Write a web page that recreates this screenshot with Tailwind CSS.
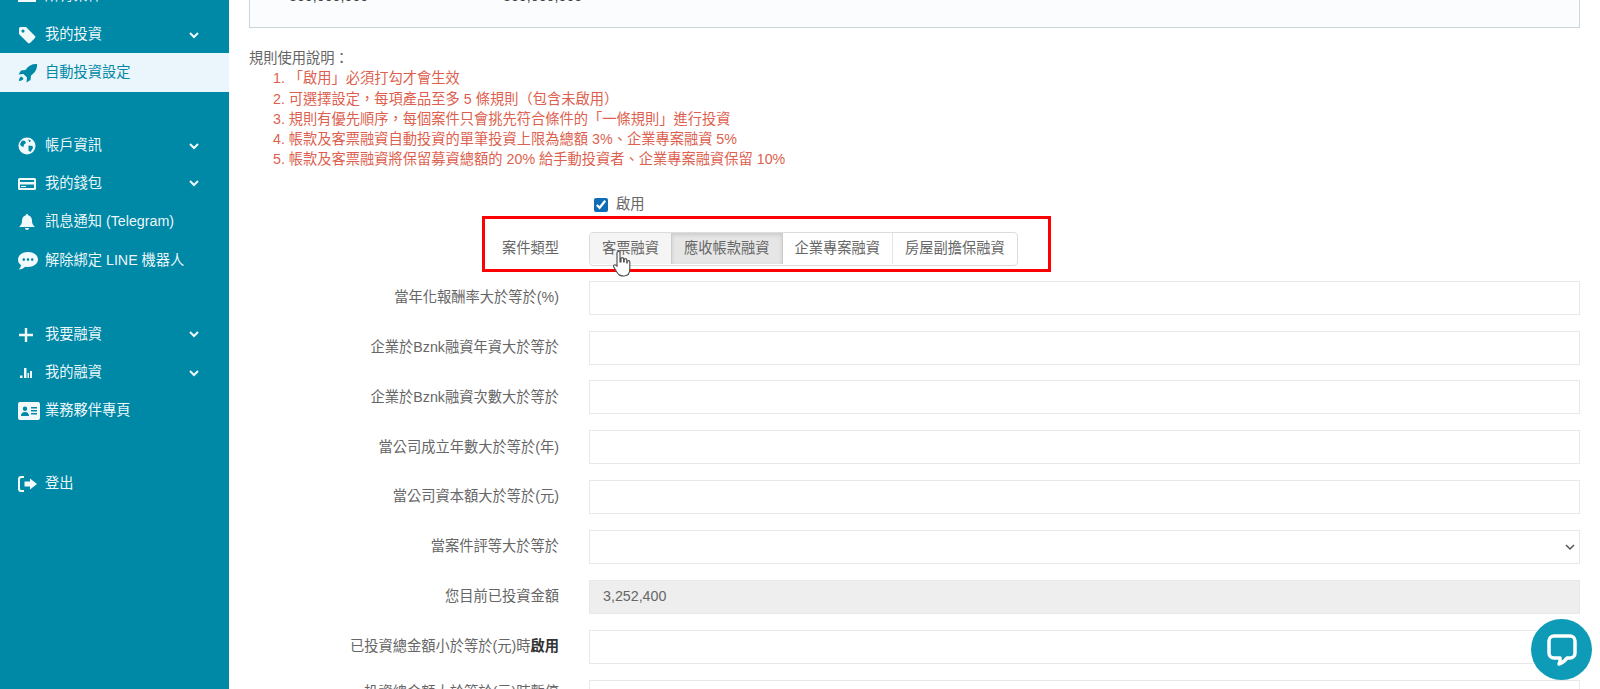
<!DOCTYPE html>
<html lang="zh-Hant">
<head>
  <meta charset="UTF-8">
  <title>自動投資設定</title>
  <script src="https://cdn.jsdelivr.net/npm/@tailwindcss/browser@4"></script>
</head>
<body class="bg-white overflow-hidden font-['Liberation_Sans','Noto_Sans_CJK_TC',sans-serif] text-[14.25px] text-[#666]">
<div class="flex h-[689px] w-[1600px] overflow-hidden relative">

  <!-- sidebar -->
  <aside class="w-[229px] shrink-0 bg-[#0089a7] text-white/95">
    <div class="-mt-[23px]">
      <a class="flex items-center h-[38px] pl-[18px]">
        <svg class="w-[18px] h-[14px]" viewBox="0 0 18 14" fill="currentColor"><path d="M0 1h18v12H0zM2 3v8h14V3z"/><path d="M4 5h10v1.500H4zM4 8h10v1.500H4z"/></svg>
        <span class="ml-[9px]">所有案件</span>
      </a>
      <a class="flex items-center h-[36px] mt-[1px] pt-[2px] pl-[18px]">
        <svg class="w-[18px] h-[18px]" viewBox="0 0 18 18" fill="currentColor"><path d="M1 2.500A1.500 1.500 0 0 1 2.500 1H8l9 9a1.500 1.500 0 0 1 0 2l-5 5a1.500 1.500 0 0 1-2 0L1 8zM5 3.500a1.600 1.600 0 1 0 0 3.200 1.600 1.600 0 0 0 0-3.200z" fill-rule="evenodd"/></svg>
        <span class="ml-[9px]">我的投資</span>
        <svg class="ml-auto mr-[30px] w-[10px] h-[7px]" viewBox="0 0 10 7" fill="none" stroke="currentColor" stroke-width="2"><path d="M1 1l4 4 4-4"/></svg>
      </a>
      <a class="flex items-center h-[39px] mt-[1px] pl-[18px] bg-[#eaf6fb] text-[#0089a7]">
        <svg class="w-[20px] h-[20px]" viewBox="0 0 20 20" fill="currentColor"><path d="M19 1c.4 4.500-1.500 8.500-6 11.500l-.5 4.500L8.500 19.500l.5-5-3.500-3.500-5 .5L3 7.500l4.500-.5C10.500 2.500 14.500.6 19 1z"/><path d="M3.500 13.500c-1.500.5-2.500 2-2.500 4.500 2.500 0 4-1 4.500-2.500z"/></svg>
        <span class="ml-[7px]">自動投資設定</span>
      </a>

      <a class="flex items-center h-[38px] mt-[35px] pl-[18px]">
        <svg class="w-[18px] h-[18px]" viewBox="0 0 18 18"><circle cx="9" cy="9" r="8.500" fill="currentColor"/><path d="M4 3.500l3 .5 1 2-2 1.500-.5 2.500L3 9 2 7zM10.500 8.500l4 .5.500 2-2.500 4-2-1.500zM10 2.500l3 1-1.500 2z" fill="#0089a7"/></svg>
        <span class="ml-[9px]">帳戶資訊</span>
        <svg class="ml-auto mr-[30px] w-[10px] h-[7px]" viewBox="0 0 10 7" fill="none" stroke="currentColor" stroke-width="2"><path d="M1 1l4 4 4-4"/></svg>
      </a>
      <a class="flex items-center h-[37px] pl-[18px]">
        <svg class="w-[18px] h-[14px]" viewBox="0 0 18 14" fill="currentColor"><path fill-rule="evenodd" d="M1.500 1h15A1.500 1.500 0 0 1 18 2.500v9a1.500 1.500 0 0 1-1.500 1.500h-15A1.500 1.500 0 0 1 0 11.500v-9A1.500 1.500 0 0 1 1.500 1zM2 3v2h14V3zM2 7.500V11h14V7.500zM3 9h5v1H3z"/></svg>
        <span class="ml-[9px]">我的錢包</span>
        <svg class="ml-auto mr-[30px] w-[10px] h-[7px]" viewBox="0 0 10 7" fill="none" stroke="currentColor" stroke-width="2"><path d="M1 1l4 4 4-4"/></svg>
      </a>
      <a class="flex items-center h-[39px] pl-[18px]">
        <svg class="w-[18px] h-[16px]" viewBox="0 0 18 16" fill="currentColor"><path d="M9 0a1.200 1.200 0 0 1 1.200 1.200C12.500 1.800 14 3.800 14 6.500c0 3 .8 4.500 2.500 6v.5h-15v-.5C3.200 11 4 9.500 4 6.500c0-2.700 1.500-4.700 3.800-5.300A1.200 1.200 0 0 1 9 0z"/><path d="M7 14h4a2 2 0 0 1-4 0z"/></svg>
        <span class="ml-[9px]">訊息通知 (Telegram)</span>
      </a>
      <a class="flex items-center h-[39px] pl-[18px]">
        <svg class="w-[20px] h-[18px]" viewBox="0 0 20 18" fill="currentColor"><path fill-rule="evenodd" d="M10 0c5.500 0 10 3.200 10 7.500S15.500 15 10 15c-1 0-1.900-.1-2.800-.3C5.700 16.200 3.500 17.500.8 17.500c1.200-1.200 2-2.700 2.200-4.400C1.100 11.800 0 9.800 0 7.500 0 3.200 4.500 0 10 0zM5.800 6.300a1.300 1.300 0 1 0 0 2.600 1.300 1.300 0 0 0 0-2.600zm4.200 0a1.300 1.300 0 1 0 0 2.600 1.300 1.300 0 0 0 0-2.600zm4.200 0a1.300 1.300 0 1 0 0 2.600 1.300 1.300 0 0 0 0-2.600z"/></svg>
        <span class="ml-[7px]">解除綁定 LINE 機器人</span>
      </a>

      <a class="flex items-center h-[39px] mt-[35px] pl-[18px]">
        <svg class="w-[16px] h-[16px]" viewBox="0 0 16 16" fill="currentColor"><path d="M6.800 1h2.400v5.800H15v2.400H9.200V15H6.800V9.200H1V6.800h5.800z"/></svg>
        <span class="ml-[11px]">我要融資</span>
        <svg class="ml-auto mr-[30px] w-[10px] h-[7px]" viewBox="0 0 10 7" fill="none" stroke="currentColor" stroke-width="2"><path d="M1 1l4 4 4-4"/></svg>
      </a>
      <a class="flex items-center h-[38px] pl-[18px]">
        <svg class="w-[16px] h-[14px]" viewBox="0 0 16 14" fill="currentColor"><path d="M2 9.500h2.500V12H2zM6 2h2.500v10H6zM9.500 7h1.500v5H9.500zM12 5h2v7h-2z"/></svg>
        <span class="ml-[11px]">我的融資</span>
        <svg class="ml-auto mr-[30px] w-[10px] h-[7px]" viewBox="0 0 10 7" fill="none" stroke="currentColor" stroke-width="2"><path d="M1 1l4 4 4-4"/></svg>
      </a>
      <a class="flex items-center h-[38px] pl-[18px]">
        <svg class="w-[22px] h-[18px]" viewBox="0 0 22 18" fill="currentColor"><path fill-rule="evenodd" d="M2 0h18a2 2 0 0 1 2 2v14a2 2 0 0 1-2 2H2a2 2 0 0 1-2-2V2a2 2 0 0 1 2-2zM7 4.500a2.200 2.200 0 1 0 0 4.400 2.200 2.200 0 0 0 0-4.400zM3 14h8c0-2.500-1.500-4-4-4s-4 1.500-4 4zM13 5v1.500h6V5zM13 8v1.500h6V8zM13 11v1.500h6V11z"/></svg>
        <span class="ml-[5px]">業務夥伴專頁</span>
      </a>

      <a class="flex items-center h-[38px] mt-[35px] pl-[18px]">
        <svg class="w-[20px] h-[18px]" viewBox="0 0 20 18" fill="currentColor"><path d="M6 1v2H3.500A1.500 1.500 0 0 0 2 4.500v9A1.500 1.500 0 0 0 3.500 15H6v2H3a3 3 0 0 1-3-3V4a3 3 0 0 1 3-3z"/><path d="M12 3.500l7 5.500-7 5.500V11.500H6.500v-5H12z"/></svg>
        <span class="ml-[7px]">登出</span>
      </a>
    </div>
  </aside>

  <!-- main -->
  <main class="flex-1 pl-[20px] pr-[20px]">
    <div class="h-[28px] bg-[#fbfcfd] border border-t-0 border-[#ccd6dd] pl-[39px] overflow-hidden">
      <div class="flex -mt-[12px] leading-[16px] text-[#444]">
        <span class="w-[214px]">300,000,000</span>
        <span>300,000,000</span>
      </div>
    </div>

    <div class="mt-[20px] leading-[20.3px]">
      <p>規則使用說明：</p>
      <ol class="pl-[24px] text-[#dd5f4f]">
        <li>1. 「啟用」必須打勾才會生效</li>
        <li>2. 可選擇設定，每項產品至多 5 條規則（包含未啟用）</li>
        <li>3. 規則有優先順序，每個案件只會挑先符合條件的「一條規則」進行投資</li>
        <li>4. 帳款及客票融資自動投資的單筆投資上限為總額 3%、企業專案融資 5%</li>
        <li>5. 帳款及客票融資將保留募資總額的 20% 給手動投資者、企業專案融資保留 10%</li>
      </ol>
    </div>

    <form class="mt-[25px]">
      <label class="flex items-center ml-[345px] h-[20px]">
        <input type="checkbox" checked class="w-[14px] h-[14px] accent-[#0f6cb5]">
        <span class="ml-[8px]">啟用</span>
      </label>

      <div class="flex items-center mt-[17px] h-[34px]">
        <span class="w-[310px] text-right">案件類型</span>
        <div class="ml-[30px] flex h-[34px] pb-[1px] border border-[#dcdcdc] rounded-[4px] overflow-hidden">
          <span class="px-[12px] flex items-center bg-[#f5f5f5]">客票融資</span>
          <span class="px-[12px] flex items-center bg-[#e6e6e6] border-x border-[#ccc] shadow-[inset_0_2px_4px_rgba(0,0,0,0.12)]">應收帳款融資</span>
          <span class="px-[12px] flex items-center border-r border-[#e4e4e4]">企業專案融資</span>
          <span class="px-[12px] flex items-center">房屋副擔保融資</span>
        </div>
      </div>

      <div class="flex flex-col gap-[15.85px] mt-[15px]">
        <div class="flex items-center h-[34px]"><span class="w-[310px] text-right">當年化報酬率大於等於(%)</span><div class="ml-[30px] flex-1 h-[34px] border border-[#e8e8e8]"></div></div>
        <div class="flex items-center h-[34px]"><span class="w-[310px] text-right">企業於Bznk融資年資大於等於</span><div class="ml-[30px] flex-1 h-[34px] border border-[#e8e8e8]"></div></div>
        <div class="flex items-center h-[34px]"><span class="w-[310px] text-right">企業於Bznk融資次數大於等於</span><div class="ml-[30px] flex-1 h-[34px] border border-[#e8e8e8]"></div></div>
        <div class="flex items-center h-[34px]"><span class="w-[310px] text-right">當公司成立年數大於等於(年)</span><div class="ml-[30px] flex-1 h-[34px] border border-[#e8e8e8]"></div></div>
        <div class="flex items-center h-[34px]"><span class="w-[310px] text-right">當公司資本額大於等於(元)</span><div class="ml-[30px] flex-1 h-[34px] border border-[#e8e8e8]"></div></div>
        <div class="flex items-center h-[34px]"><span class="w-[310px] text-right">當案件評等大於等於</span>
          <div class="ml-[30px] flex-1 h-[34px] border border-[#e8e8e8] flex items-center justify-end pr-[4px]">
            <svg class="w-[10px] h-[7px]" viewBox="0 0 10 7" fill="none" stroke="#555" stroke-width="1.500"><path d="M1 1l4 4 4-4"/></svg>
          </div>
        </div>
        <div class="flex items-center h-[34px]"><span class="w-[310px] text-right">您目前已投資金額</span><div class="ml-[30px] flex-1 h-[34px] border border-[#e8e8e8] bg-[#eeeeee] flex items-center pl-[13px]">3,252,400</div></div>
        <div class="flex items-center h-[34px]"><span class="w-[310px] text-right">已投資總金額小於等於(元)時<b class="text-[#333]">啟用</b></span><div class="ml-[30px] flex-1 h-[34px] border border-[#e8e8e8]"></div></div>
        <div class="flex items-center h-[34px]"><span class="w-[310px] text-right -mt-[8px]">投資總金額大於等於(元)時暫停</span><div class="ml-[30px] flex-1 h-[34px] border border-[#e8e8e8]"></div></div>
      </div>
    </form>
  </main>

  <!-- annotation over the button group -->
  <div class="absolute left-[482px] top-[216px] w-[569px] h-[56px] border-[3px] border-[#ff0000]"></div>

  <!-- cursor -->
  <svg class="absolute left-[613px] top-[251px] w-[18px] h-[27px]" viewBox="0 0 18 27" fill="#fff" stroke="#555" stroke-width="1.200"><path d="M4 2a1.500 1.500 0 0 1 3 0v9l1 0V8a1.300 1.300 0 0 1 2.600 0v3h.6V9a1.300 1.300 0 0 1 2.600 0v3h.4v-1a1.300 1.300 0 0 1 2.600 0v7c0 4-2 7-6 7s-5-1-7-4l-3-5c-1-2 1-3 2.500-1.500L4 15z"/></svg>

  <!-- chat bubble -->
  <div class="absolute left-[1531px] top-[619px] w-[61px] h-[61px] rounded-full bg-[#0d9bb8] flex items-center justify-center">
    <svg class="w-[32px] h-[34px]" viewBox="0 0 32 34" fill="none" stroke="#fff" stroke-width="3.500" stroke-linejoin="round"><path d="M8 3h16a5 5 0 0 1 5 5v12a5 5 0 0 1-5 5h-3c-2 3-5 5-8 6 1-2 1.500-4 1-6H8a5 5 0 0 1-5-5V8a5 5 0 0 1 5-5z"/></svg>
  </div>
</div>
</body>
</html>
